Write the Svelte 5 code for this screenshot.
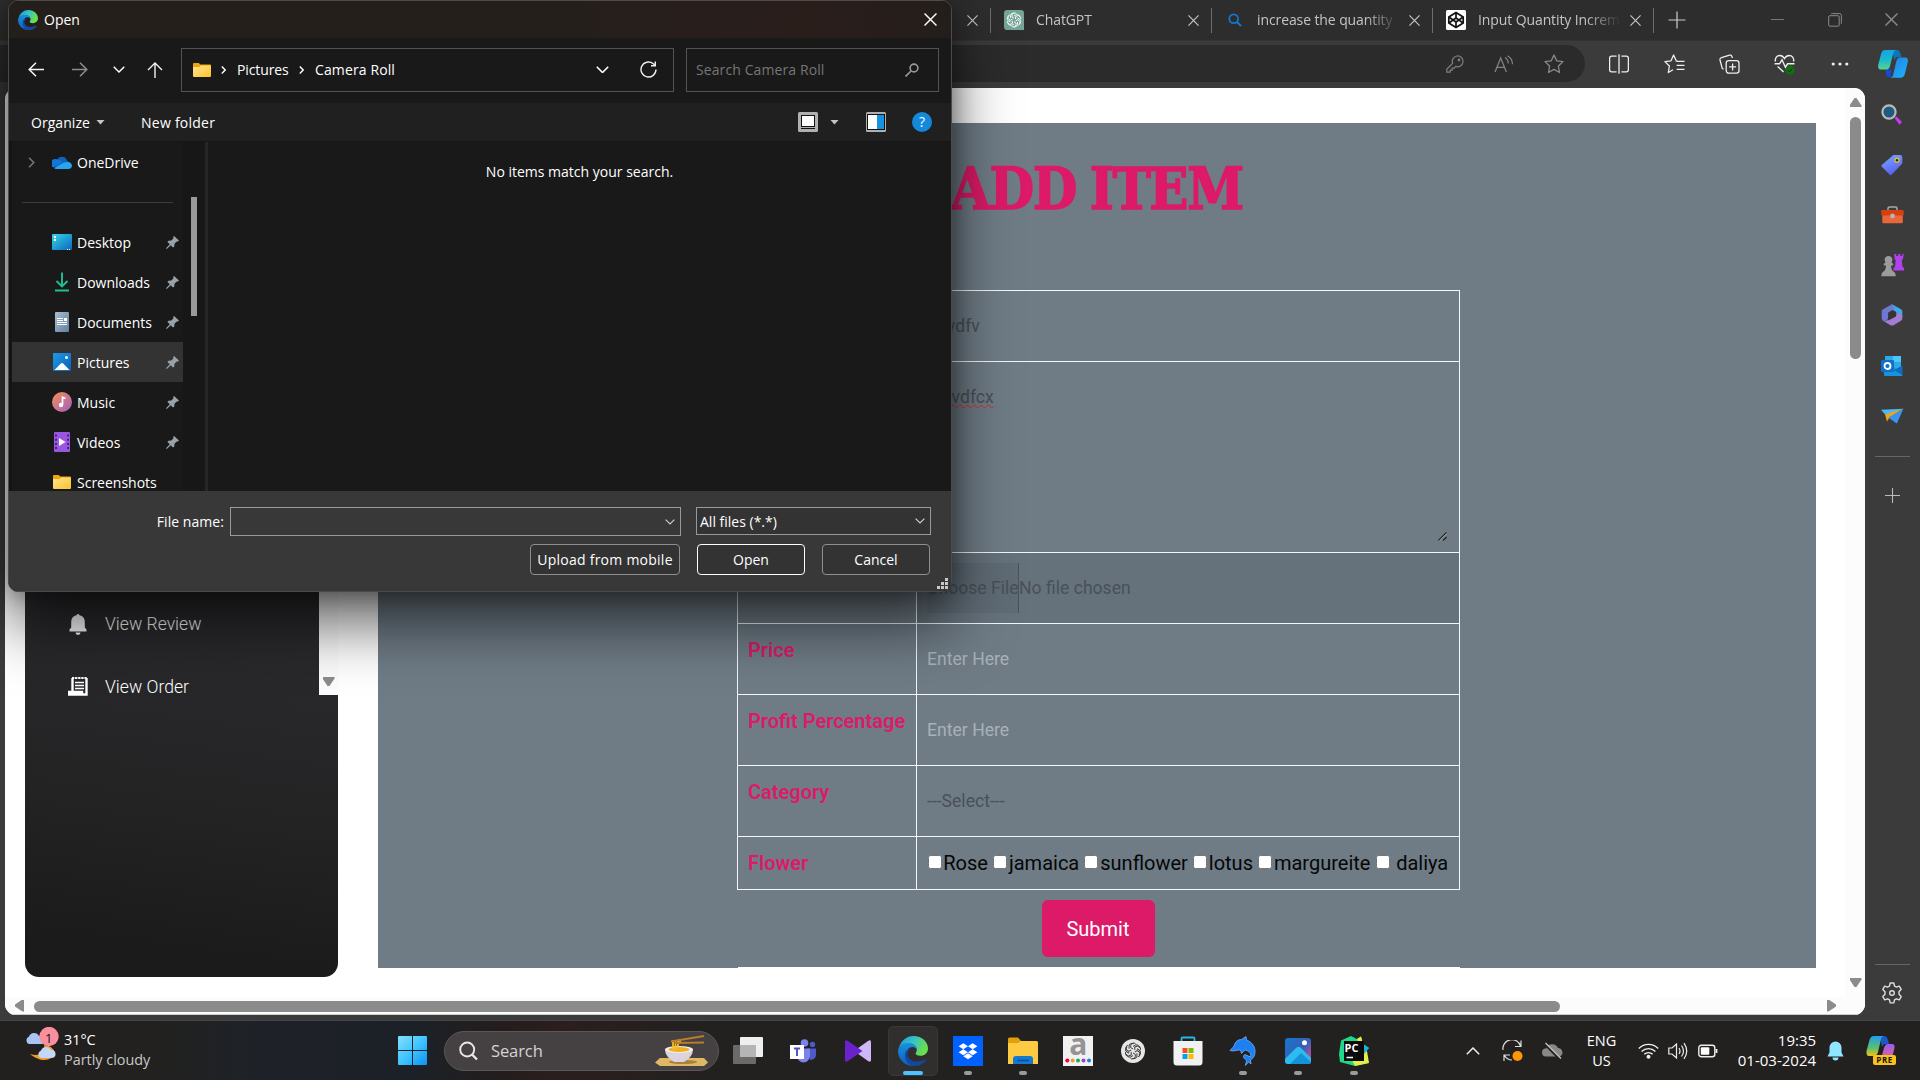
<script>
  const tabs = [
    { kind: 'gpt', title: 'ChatGPT' },
    { kind: 'search', title: 'increase the quantity' },
    { kind: 'codepen', title: 'Input Quantity Increm' }
  ];
  const tools = ['split', 'favs', 'collections', 'health', 'dots', 'copilot'];
  const sideIcons = ['lens', 'tag', 'toolbox', 'chess', 'm365', 'outlook', 'plane'];
  const places = [
    { icon: 'desktop', name: 'Desktop', pin: true },
    { icon: 'downloads', name: 'Downloads', pin: true },
    { icon: 'documents', name: 'Documents', pin: true },
    { icon: 'pictures', name: 'Pictures', pin: true, active: true },
    { icon: 'music', name: 'Music', pin: true },
    { icon: 'videos', name: 'Videos', pin: true },
    { icon: 'folder', name: 'Screenshots', pin: false }
  ];
  const apps = [
    { icon: 'taskview' }, { icon: 'teams' }, { icon: 'vs' },
    { icon: 'edge', active: true }, { icon: 'dropbox', open: true }, { icon: 'explorer', open: true },
    { icon: 'amazon' }, { icon: 'gptRound' }, { icon: 'store' },
    { icon: 'dolphin', open: true }, { icon: 'photos', open: true }, { icon: 'pycharm', open: true }
  ];
  const flowers = ['Rose', 'jamaica', 'sunflower', 'lotus', 'margureite', 'daliya'];
  const petals = [0, 60, 120, 180, 240, 300];
</script>

{#snippet cross(size)}
  <svg width={size} height={size} viewBox="0 0 10 10"><path d="M0.4 0.4 9.6 9.6M9.6 0.4 0.4 9.6" stroke="currentColor" stroke-width="1.1" fill="none" /></svg>
{/snippet}

{#snippet chevDown(w)}
  <svg width={w} height={w * 0.6} viewBox="0 0 10 6"><path d="M0.6 0.6 5 5 9.4 0.6" stroke="currentColor" stroke-width="1.2" fill="none" /></svg>
{/snippet}

{#snippet knot()}
  {#each petals as a}
    <path transform="rotate({a} 12 12)" d="M12 9.200 L8.900 7.500 V4.800 A3.900 3.900 0 0 1 15.600 2.600 M12 5.900 L15.500 4 A3.900 3.900 0 0 1 20.600 7.900" fill="none" stroke="currentColor" stroke-width="1.300" />
  {/each}
{/snippet}

{#snippet icon(name)}
  {#if name === 'gpt'}
    <svg width="20" height="20" viewBox="0 0 24 24" color="#fff"><path d="M4 0H20A4 4 0 0 1 24 4V24H4A4 4 0 0 1 0 20V4A4 4 0 0 1 4 0Z" fill="#74a596" /><g transform="translate(2.4 2.4) scale(.8)">{@render knot()}</g></svg>
  {:else if name === 'gptRound'}
    <svg width="24" height="24" viewBox="0 0 24 24" color="#3a3a3a"><circle cx="12" cy="12" r="12" fill="#e6e6e6" /><g transform="translate(3 3) scale(.75)">{@render knot()}</g></svg>
  {:else if name === 'search'}
    <svg width="14" height="14" viewBox="0 0 14 14"><circle cx="5.7" cy="5.7" r="4.4" fill="none" stroke="#1676d0" stroke-width="1.8" /><path d="M9 9 13 13" stroke="#1676d0" stroke-width="2" /></svg>
  {:else if name === 'codepen'}
    <svg width="20" height="20" viewBox="0 0 20 20"><rect width="20" height="20" rx="1.5" fill="#fff" /><g fill="none" stroke="#111" stroke-width="1.7" stroke-linejoin="round"><path d="M10 2.6 17.2 7 V13 L10 17.4 2.8 13 V7Z" /><path d="M2.8 7 10 12 17.2 7M2.8 13 10 8 17.2 13M10 2.6V8M10 12V17.4" /></g></svg>
  {:else if name === 'key'}
    <svg width="18" height="18" viewBox="0 0 18 18"><g fill="none" stroke="#808080" stroke-width="1.2"><path d="M6.6 8.3 1.2 13.7 a1.3 1.3 0 0 0-.4 1 V17.2 H4.2 V15.2 H6.2 V13.2 H8.2 L9.7 11.4 A5.4 5.4 0 1 0 6.6 8.3Z" /><circle cx="13" cy="5" r=".8" /></g></svg>
  {:else if name === 'aloud'}
    <svg width="20" height="18" viewBox="0 0 20 18"><g fill="none" stroke="#808080" stroke-width="1.3"><path d="M1 17 6.7 3 12.4 17M3 12.4H10.5M11 2.5 a7 7 0 0 1 3.2 6M13.5 0.8 a10 10 0 0 1 5 8.4" /></g></svg>
  {:else if name === 'star'}
    <svg width="20" height="20" viewBox="0 0 20 20"><path d="M10 1 12.7 6.8 19 7.6 14.4 12 15.5 18.5 10 15.4 4.5 18.5 5.6 12 1 7.6 7.3 6.8Z" fill="none" stroke="#8a8a8a" stroke-width="1.3" stroke-linejoin="round" /></svg>
  {:else if name === 'split'}
    <svg width="20" height="20" viewBox="0 0 20 20"><g fill="none" stroke="#eee" stroke-width="1.3"><path d="M7.6 2.2H2.6a2 2 0 0 0-2 2v11.6a2 2 0 0 0 2 2h5M12.4 2.2h5a2 2 0 0 1 2 2v11.6a2 2 0 0 1-2 2h-5M10 0.2v19.6" /></g></svg>
  {:else if name === 'favs'}
    <svg width="21" height="20" viewBox="0 0 21 20"><path d="M13 7.2 12.2 6.8 9.6 1 7 6.8 .9 7.6 5.4 12 4.3 18.5 9 15.8M12.6 7.4H20.5M12.6 11.4H20.5M12.6 15.4H20.5" fill="none" stroke="#eee" stroke-width="1.3" stroke-linejoin="round" /></svg>
  {:else if name === 'collections'}
    <svg width="21" height="20" viewBox="0 0 21 20"><g fill="none" stroke="#eee" stroke-width="1.3"><rect x="7.2" y="6.6" width="12.8" height="12.6" rx="2.6" /><path d="M13.6 9.4v7M10.1 12.9h7M4.6 15.2 3.2 14.4 1 6 a2 2 0 0 1 1.5-2.4L10.6 1.2 a2 2 0 0 1 2.4 1.4L13.4 4" /></g></svg>
  {:else if name === 'health'}
    <svg width="21" height="21" viewBox="0 0 21 21"><path d="M1.400 7.500C.8 4 3 1.500 5.700 1.500 8 1.500 9.500 2.800 10.500 4.500 11.500 2.800 13 1.500 15.300 1.500 18 1.500 20.200 4 19.600 7.500M.6 9.800H5.6L8 5.800 11.400 13.200 13.600 9.800H20.500M3.600 12.400 9.600 18" fill="none" stroke="#eee" stroke-width="1.4" /><circle cx="16" cy="16.2" r="4.6" fill="#0f7010" /><path d="M13.9 16.3 15.4 17.8 18.2 14.8" fill="none" stroke="#222" stroke-width="1" /></svg>
  {:else if name === 'dots'}
    <svg width="18" height="4" viewBox="0 0 18 4" fill="#eee"><circle cx="2.2" cy="2" r="1.6" /><circle cx="9" cy="2" r="1.6" /><circle cx="15.8" cy="2" r="1.6" /></svg>
  {:else if name === 'copilot'}
    <svg width="30" height="28" viewBox="0 0 30 28"><defs><linearGradient id="cpa" x1="0" y1="0" x2="0" y2="1"><stop offset="0" stop-color="#14a5e6" /><stop offset=".5" stop-color="#1bb8cf" /><stop offset="1" stop-color="#55d68c" /></linearGradient><linearGradient id="cpb" x1="0" y1="0" x2="1" y2="1"><stop offset="0" stop-color="#2a78e4" /><stop offset="1" stop-color="#18b8f8" /></linearGradient></defs><path d="M14 0h5c2 0 3 1.500 3.500 4l1 3.200h-4c-2 0-2.600 1-3.100 3z" fill="#0b76b5" /><path d="M8 19.500h5.500l-1 8c-2.500 0-4-1-4.500-4z" fill="#1748d8" /><path d="M7.500 0H19c-2.500 0-3.300 1.500-4 4.200L12 16c-.7 2.700-1.800 3.600-4.400 3.600H3C.6 19.600-.3 17.500.3 14.500L3.200 3.600C4 1 5.200 0 7.500 0Z" fill="url(#cpa)" /><path d="M22.500 7.600H27c2.500 0 3.400 2 2.700 5L26.800 24c-.7 2.600-2 3.800-4.300 3.800H11.600c2.300 0 3.200-1.600 3.800-4l2.800-12c.7-3 1.800-4.200 4.300-4.200Z" fill="url(#cpb)" /></svg>
  {:else if name === 'lens'}
    <svg width="22" height="22" viewBox="0 0 22 22"><path d="M13.500 14 15.500 12.500 21 18 18.500 20.800Z" fill="#c63bf0" /><circle cx="8" cy="8" r="6.600" fill="#1f5a80" stroke="#b9b9b9" stroke-width="2.200" /></svg>
  {:else if name === 'tag'}
    <svg width="22" height="22" viewBox="0 0 22 22"><defs><linearGradient id="tg" x1="0" y1="0" x2=".4" y2="1"><stop offset="0" stop-color="#79a9ff" /><stop offset="1" stop-color="#5a62f0" /></linearGradient></defs><path d="M12.500 1H19a2.300 2.300 0 0 1 2.300 2.300V9.500L10.800 20.600a1.600 1.600 0 0 1-2.200 0L1 13a1.600 1.600 0 0 1 0-2.200Z" fill="url(#tg)" /><circle cx="16" cy="6.200" r="2.600" fill="#e8c020" /><circle cx="16" cy="6.200" r="1.200" fill="#222" /></svg>
  {:else if name === 'toolbox'}
    <svg width="23" height="18" viewBox="0 0 23 18"><path d="M7 4V2.600A1.600 1.600 0 0 1 8.600 1h5.800A1.600 1.600 0 0 1 16 2.600V4" fill="none" stroke="#a9a9a9" stroke-width="1.500" /><rect x="1.300" y="8.500" width="20.500" height="8.800" rx="1.200" fill="#e8663a" /><rect x=".2" y="4" width="22.500" height="5.500" rx=".8" fill="#d2410f" /><circle cx="11.500" cy="10" r="2.400" fill="#bdb3ad" /></svg>
  {:else if name === 'chess'}
    <svg width="23" height="24" viewBox="0 0 23 24"><path d="M13.200 1h2v2h2V1h2.200v2h1.900V1h1.500l-1 5.500h-1l.6 7 1.600 1.500v2.500H12.500V15l1.600-1.500.6-7h-1Z" fill="#b042ee" /><path d="M7.500 3a4 4 0 0 1 3 6.600 l1.700 1.200v1.600H10c0 3 1 5.200 3.200 6.600 1.200 1 1.500 2 1.500 4.200H.4c0-2.200.3-3.200 1.500-4.200C4 17.600 5 15.400 5 12.400H2.800v-1.600l1.700-1.200A4 4 0 0 1 7.500 3Z" fill="#9c9c9c" /></svg>
  {:else if name === 'm365'}
    <svg width="22" height="22" viewBox="0 0 22 22"><path d="M11 .3 20 5.200Q21.300 6 21.300 7.500V13L15.500 10V8L9 4.500Z" fill="#3fa9e8" /><path d="M11 .3 2 5.200Q.7 6 .7 7.500V14.500Q.7 16.500 2.500 17 6.500 17.500 7.200 13.500V8.500L13.500 5Z" fill="#7376cf" /><path d="M21.300 11.500V14.500Q21.300 16 20 16.700L12.500 21.200Q11 22 9.500 21.200L2 16.800Q4 17.800 6.500 16.300L15.500 11V8Z" fill="#a47cd6" /><path d="M7.300 9 11 7 15 9v3.500l-7.700 4Z" fill="#353535" /></svg>
  {:else if name === 'outlook'}
    <svg width="22" height="20" viewBox="0 0 22 20"><rect x="4" y="0" width="16" height="13" fill="#2fa8e8" /><rect x="12" y="0" width="8" height="6" fill="#4cc5fa" /><path d="M3 13 12 10 21.500 19a1 1 0 0 1-.6 1H4a1 1 0 0 1-1-1Z" fill="#1793da" /><path d="M21.500 9.500v9.500L13 14Z" fill="#0d6cbd" /><rect x="0" y="4" width="13" height="12" rx="1.200" fill="#0f70c8" /><circle cx="6.500" cy="10" r="3" fill="none" stroke="#fff" stroke-width="1.800" /></svg>
  {:else if name === 'plane'}
    <svg width="23" height="16" viewBox="0 0 23 16"><path d="M0 1.800 22.500.8 5 7.500Z" fill="#4eb9f5" /><path d="M4 6.500 22.500.8 8.500 9.500 6 13.500Z" fill="#eda51a" /><path d="M22.500.8 15.800 15.500 7.500 9.800Z" fill="#3894ee" /></svg>
  {:else if name === 'gear'}
    <svg width="22" height="22" viewBox="0 0 22 22"><path d="M9.200 1h3.600l.7 3 1.900 1.100 2.900-1 1.900 3.200L18 9.700v2.600l2.200 2.300-1.900 3.200-2.900-1-1.900 1.100-.7 3H9.200l-.7-3-1.900-1.100-2.900 1-1.900-3.200L4 12.300V9.700L1.800 7.400l1.900-3.200 2.900 1L8.500 4Z" fill="none" stroke="#ddd" stroke-width="1.400" stroke-linejoin="round" /><circle cx="11" cy="11" r="2.300" fill="none" stroke="#ddd" stroke-width="1.400" /></svg>
  {:else if name === 'folder'}
    <svg width="18" height="14" viewBox="0 0 18 14"><defs><linearGradient id="fo" x1="0" y1="0" x2="1" y2="1"><stop offset="0" stop-color="#ffe391" /><stop offset="1" stop-color="#fcc42c" /></linearGradient></defs><path d="M0 1A1 1 0 0 1 1 0H5.800L7.300 1.500H17a1 1 0 0 1 1 1V6H0Z" fill="#efa60c" /><path d="M0 4H6.500L8 2.500H18V13a1 1 0 0 1-1 1H1a1 1 0 0 1-1-1Z" fill="url(#fo)" /></svg>
  {:else if name === 'desktop'}
    <svg width="20" height="16" viewBox="0 0 20 16"><defs><linearGradient id="de" x1="0" y1="0" x2="1" y2="1"><stop offset="0" stop-color="#38d5e8" /><stop offset="1" stop-color="#0a66bf" /></linearGradient></defs><rect width="20" height="16" rx="1" fill="url(#de)" /><path d="M2 2h2v2H2zM2 5h2v2H2zM15 15h1v1h-1zM17 15h1v1h-1z" fill="#fff" /></svg>
  {:else if name === 'downloads'}
    <svg width="14" height="20" viewBox="0 0 14 20"><path d="M7 .5V14M1.500 9 7 14.500 12.500 9M0 18.500H14" stroke="#1fbf95" stroke-width="1.900" fill="none" /></svg>
  {:else if name === 'documents'}
    <svg width="14" height="20" viewBox="0 0 14 20"><defs><linearGradient id="do" x1="0" y1="0" x2="1" y2="1"><stop offset="0" stop-color="#a9bdd0" /><stop offset="1" stop-color="#61809f" /></linearGradient></defs><rect width="14" height="20" rx="1" fill="url(#do)" /><path d="M2 6.500H8M2 8.500H8M2 10.500H12M2 12.500H12" stroke="#fff" stroke-width="1" /><rect x="9" y="6" width="3" height="3" fill="#fff" /></svg>
  {:else if name === 'pictures'}
    <svg width="18" height="18" viewBox="0 0 18 18"><defs><linearGradient id="pi" x1="0" y1="0" x2="1" y2="1"><stop offset="0" stop-color="#1f9be8" /><stop offset="1" stop-color="#0a5fb8" /></linearGradient></defs><rect width="18" height="18" rx="1" fill="url(#pi)" /><path d="M1.500 17 7.800 10.500Q9 9.600 10.200 10.500L16.500 17Z" fill="#fff" /><circle cx="13.500" cy="4.500" r="1.500" fill="#fff" /></svg>
  {:else if name === 'music'}
    <svg width="20" height="20" viewBox="0 0 20 20"><defs><linearGradient id="mu" x1="0" y1="0" x2="1" y2="1"><stop offset=".1" stop-color="#f08a5d" /><stop offset="1" stop-color="#a05fc8" /></linearGradient></defs><circle cx="10" cy="10" r="10" fill="url(#mu)" /><circle cx="9" cy="13" r="2.200" fill="#fff" /><path d="M10.500 13V5.300L13.500 6.500" stroke="#fff" stroke-width="1.700" fill="none" /></svg>
  {:else if name === 'videos'}
    <svg width="16" height="20" viewBox="0 0 16 20"><rect width="16" height="20" rx="1" fill="#9a56e0" /><path d="M2 2.500V19M14 2.500V19" stroke="#3e1f72" stroke-width="1.800" stroke-dasharray="2 2.200" /><path d="M5 6 11.500 10 5 14Z" fill="#fff" /></svg>
  {:else if name === 'taskview'}
    <svg width="32" height="30" viewBox="0 0 32 30"><rect x="8" y="1" width="23" height="20" rx="1" fill="#efefef" /><rect x="1" y="9" width="23" height="19" rx="1" fill="#777" opacity=".85" /><path d="M8 9H24V21H8Z" fill="#b5b5b5" /></svg>
  {:else if name === 'teams'}
    <svg width="28" height="26" viewBox="0 0 28 26"><circle cx="15.500" cy="5" r="3.800" fill="#7b83eb" /><circle cx="23.500" cy="6.500" r="2.700" fill="#5059c9" /><path d="M18 10.500H27V17a5 5 0 0 1-6 4.800Z" fill="#5059c9" /><path d="M8 10.500H21V18a6.500 6.500 0 0 1-13 0Z" fill="#7b83eb" /><rect x="1" y="7" width="14" height="14" fill="#fff" /><path d="M5 10.500H11M8 10.500V18" stroke="#4b53bc" stroke-width="1.900" /></svg>
  {:else if name === 'vs'}
    <svg width="28" height="24" viewBox="0 0 28 24"><path d="M27 2.500V21.500Q26.500 23.500 24 22L10 12 24 2Q26.500.5 27 2.500Z" fill="#cdb8f5" /><path d="M1 2.500Q1.500.5 4 2L18.500 12 4 22Q1.500 23.500 1 21.500Z" fill="#6a22cc" /></svg>
  {:else if name === 'edge'}
    <svg width="100%" height="100%" viewBox="0 0 30 30"><defs><linearGradient id="ea" x1="0" y1="0" x2="1" y2=".4"><stop offset="0" stop-color="#1c97dc" /><stop offset=".5" stop-color="#36c2c8" /><stop offset="1" stop-color="#6be04a" /></linearGradient><linearGradient id="eb" x1="0" y1="0" x2="0" y2="1"><stop offset="0" stop-color="#1a90dc" /><stop offset="1" stop-color="#0b5fc0" /></linearGradient></defs><path d="M1 12A14.800 14.800 0 0 1 15.500 0C24 0 30 6 30 12.500c0 4.500-3.400 7.300-7.500 7.300-3.500 0-4.900-1.100-4.900-2.200 0-.8 1.200-1.500 1.200-4 0-3.600-3.600-6.200-8-6.200-4 0-8.600 2-9.800 4.600Z" fill="url(#ea)" /><path d="M0 15.500C0 9.500 5.300 7 10.500 7c4.600 0 8.400 2.500 8.400 6.400-1-1.500-2.600-2.400-4.400-2.400-3.600 0-6 3-6 7 0 5.500 4 9.700 9.500 11.700A15 15 0 0 1 0 15.500Z" fill="url(#eb)" /><path d="M12.400 13.700C10 15 9 17 9.600 19.500c1 4 5 6 9.700 6 3 0 5.500-.8 7.600-2.200.6-.4 1.300.3.900.9C25.600 28 20.500 30.800 15 29.900 9.700 28.500 7 24 7 19.500 7 15 9.500 12.500 12.400 13.700Z" fill="#12499c" /></svg>
  {:else if name === 'dropbox'}
    <svg width="30" height="30" viewBox="0 0 30 30"><rect width="30" height="30" fill="#0061fe" /><path d="M10.300 7.300 15 10.300 10.300 13.300 5.600 10.300ZM19.700 7.300 24.400 10.300 19.700 13.300 15 10.300ZM10.300 13.300 15 16.300 10.300 19.300 5.600 16.300ZM19.700 13.300 24.400 16.300 19.700 19.300 15 16.300ZM15 17.300 19.700 20.300 15 23.300 10.300 20.300Z" fill="#fff" /></svg>
  {:else if name === 'explorer'}
    <svg width="30" height="28" viewBox="0 0 30 28"><path d="M0 2A1.500 1.500 0 0 1 1.500.5H10L13 4H27V10H0Z" fill="#e0a00c" /><path d="M0 6H10L13 4H28.500A1.500 1.500 0 0 1 30 5.500V27H0Z" fill="#fccb41" /><path d="M5 27V22a3 3 0 0 1 3-3H22a3 3 0 0 1 3 3V27Z" fill="#1579d0" /><path d="M9 23.500H21" stroke="#0b4f95" stroke-width="1.500" /></svg>
  {:else if name === 'amazon'}
    <span class="amz"><b>a</b><svg width="26" height="5" viewBox="0 0 26 5"><circle cx="2.300" cy="2.500" r="2" fill="#f00034" /><circle cx="7.700" cy="2.500" r="2" fill="#ef9a2d" /><circle cx="13" cy="2.500" r="2" fill="#19a95e" /><circle cx="18.500" cy="2.500" r="2" fill="#9a3fd8" /><circle cx="24" cy="2.500" r="2" fill="#1681e0" /></svg></span>
  {:else if name === 'store'}
    <svg width="30" height="30" viewBox="0 0 30 30"><path d="M8.500 6V2.500A1 1 0 0 1 9.500 1.500H20.500A1 1 0 0 1 21.500 2.500V6" fill="none" stroke="#28b5e8" stroke-width="1.800" /><path d="M.5 5H29.500V26a3.500 3.500 0 0 1-3.500 3.500H4A3.500 3.500 0 0 1 .5 26Z" fill="#f1f1f1" /><path d="M9.500 12H14.500V17H9.500Z" fill="#f25022" /><path d="M15.500 12H20.500V17H15.500Z" fill="#7fba00" /><path d="M9.500 18H14.500V23H9.500Z" fill="#00a4ef" /><path d="M15.500 18H20.500V23H15.500Z" fill="#ffb900" /></svg>
  {:else if name === 'dolphin'}
    <svg width="28" height="30" viewBox="0 0 28 30"><path d="M1 14.500C3 12 5 11 5.500 8.500 6.500 5.500 9 3.500 12.500 3.500L17 .5 17.500 4C23 6 26.500 11 26 16.500 25.800 20 24 22.500 21.500 24L22 28 19.500 26 16.500 29.500 17.500 24.500C14 22 13.500 19.500 16 18.500L21.500 21C22.500 18 20.500 15 16 14L12.500 17.500 11.500 14C8 13.500 5 16 1 14.500Z" fill="#1c80f2" stroke="#75adf5" stroke-width=".8" /></svg>
  {:else if name === 'photos'}
    <svg width="26" height="26" viewBox="0 0 26 26"><defs><linearGradient id="ph" x1="0" y1="0" x2="1" y2=".8"><stop offset="0" stop-color="#1279cf" /><stop offset=".6" stop-color="#3b5cb5" /><stop offset="1" stop-color="#c0509a" /></linearGradient></defs><rect width="26" height="26" rx="3" fill="url(#ph)" /><path d="M0 21 11.500 9.500Q13.500 8 15.500 9.500L26 20V23a3 3 0 0 1-3 3H3a3 3 0 0 1-3-3Z" fill="#2cbdf0" /><path d="M5 26 16 15 26 24Q25.500 26 23 26Z" fill="#1593d8" /><circle cx="19.500" cy="4.800" r="2.500" fill="#fff" /></svg>
  {:else if name === 'pycharm'}
    <span class="pc"><svg width="30" height="30" viewBox="0 0 30 30"><path d="M2 4.500 12 0 18 3 22 .5 24 8 30 12 26 16 30 27 16 30 1 26 0 18Z" fill="#21d789" /><path d="M18 3 22 .5 24 8 20 9ZM12 22 28 15 30 27 16 30Z" fill="#e4ee45" /><path d="M24 8 30 12 25 18Z" fill="#12b7df" /><rect x="5" y="5" width="20" height="20" fill="#0b0b0b" /><path d="M7.500 21.500H14" stroke="#fff" stroke-width="1.500" /></svg><b>PC</b></span>
  {/if}
{/snippet}

<div class="screen">
  <div class="browser">
    <header class="tabbar">
      <div class="tab first"><span class="tx">{@render cross(11)}</span></div>
      {#each tabs as t}
        <div class="tab"><span class="fav">{@render icon(t.kind)}</span><span class="tt">{t.title}</span><span class="tx">{@render cross(11)}</span></div>
      {/each}
      <div class="newtab"><svg width="18" height="18" viewBox="0 0 18 18"><path d="M9 .5V17.500M.5 9H17.500" stroke="#ccc" stroke-width="1.200" /></svg></div>
      <div class="winctl">
        <span><svg width="13" height="13" viewBox="0 0 13 13"><path d="M0 6.500H13" stroke="#777" stroke-width="1" /></svg></span>
        <span><svg width="14" height="14" viewBox="0 0 14 14"><g fill="none" stroke="#8a8a8a" stroke-width="1"><rect x=".7" y="2.700" width="10.500" height="10.500" rx="1.300" /><path d="M3 1A1.500 1.500 0 0 1 4.500.6H11.500A1.900 1.900 0 0 1 13.400 2.500V9.500Q13.400 10.500 12.800 11" /></g></svg></span>
        <span class="dim">{@render cross(13)}</span>
      </div>
    </header>
    <div class="toolbar">
      <div class="address"><span>{@render icon('key')}</span><span>{@render icon('aloud')}</span><span>{@render icon('star')}</span></div>
      <div class="tools">{#each tools as t}<span>{@render icon(t)}</span>{/each}</div>
    </div>
    <div class="main">
      <div class="viewport">
        <div class="page">
          <aside class="menu">
            <div class="menulist">
              <div class="mi"><svg width="18" height="22" viewBox="0 0 18 22" fill="#fff"><path d="M9 1q1.300 0 1.500 1.300C14 3 15.800 5.600 15.800 9v5.500l1.700 2V18.500H.5V16.500l1.700-2V9C2.200 5.600 4 3 7.500 2.300Q7.700 1 9 1ZM6.500 19.500h5a2.500 2.500 0 0 1-5 0Z" /></svg><span>View Review</span></div>
              <div class="mi"><svg width="20" height="19" viewBox="0 0 20 19"><path d="M4.500 1V14M18.500 1V17.500H1V15H14v2" fill="none" stroke="#fff" stroke-width="2.400" /><path d="M4 1H19" stroke="#fff" stroke-width="2" stroke-dasharray="2.300 .8" /><path d="M7 5.500H16M7 8.500H16M7 11.500H16" stroke="#fff" stroke-width="1.400" /></svg><span>View Order</span></div>
            </div>
            <div class="menuscroll"><i class="tri down"></i></div>
          </aside>
          <section class="panel">
            <h1><span>ADD ITEM</span></h1>
            <div class="form">
              <div class="row"><b>Name</b><div class="val dark">ddvdfv</div></div>
              <div class="row tall"><b>Description</b><div class="val dark top"><span class="misspelt">dfvvdfcx</span>
                <svg class="resize" width="9" height="9" viewBox="0 0 9 9"><path d="M.5 8.500 8.500.5M5 8.500 8.500 5" stroke="#222" stroke-width="1.300" /><path d="M1.500 8.800 8.800 1.500" stroke="#ddd" stroke-width=".6" /></svg></div></div>
              <div class="row"><b>Image</b><div class="val file"><span class="choose">Choose File</span><span>No file chosen</span></div></div>
              <div class="row"><b>Price</b><div class="val">Enter Here</div></div>
              <div class="row"><b>Profit Percentage</b><div class="val">Enter Here</div></div>
              <div class="row"><b>Category</b><div class="val dark">---Select---</div></div>
              <div class="row short"><b>Flower</b><div class="flowers">{#each flowers as f, i}<label class:wide={i === 5}><i></i>{f}</label>{/each}</div></div>
            </div>
            <div class="submit">Submit</div>
            <div class="rule"></div>
          </section>
        </div>
        <div class="vbar"><i class="tri up"></i><div class="vthumb"></div><i class="tri down"></i></div>
        <div class="hbar"><i class="tri left"></i><div class="hthumb"></div><i class="tri right"></i></div>
      </div>
      <nav class="side">
        {#each sideIcons as s}<span>{@render icon(s)}</span>{/each}
        <hr />
        <svg class="plus" width="15" height="15" viewBox="0 0 15 15"><path d="M7.500 0V15M0 7.500H15" stroke="#bbb" stroke-width="1.100" /></svg>
        <hr class="low" />
        <span class="gear">{@render icon('gear')}</span>
      </nav>
    </div>
  </div>

  <footer class="taskbar">
    <div class="weather">
      <svg width="36" height="36" viewBox="0 0 36 36"><path d="M19 18c6 0 10 4 11 8-2 7-13 11-25 1 10 3 16-2 14-9Z" fill="#f39a2a" /><path d="M4 17a4 4 0 0 1 0-7.500A5.500 5.500 0 0 1 14 9a4 4 0 0 1 3 8Z" fill="#a9c4f2" /><path d="M16 31a4 4 0 0 1 0-7.500 5.500 5.500 0 0 1 10-.5 4 4 0 0 1 1 8Z" fill="#c3d7f8" /><circle cx="24" cy="9.500" r="9.700" fill="#f98f9d" /></svg>
      <em>1</em>
      <div><p>31°C</p><p class="soft">Partly cloudy</p></div>
    </div>
    <svg class="start" width="29" height="29" viewBox="0 0 29 29"><defs><linearGradient id="win" x1="0" y1="0" x2="1" y2="1"><stop offset="0" stop-color="#87dfff" /><stop offset=".5" stop-color="#40c4ff" /><stop offset="1" stop-color="#0b93f5" /></linearGradient></defs><path d="M0 1A1 1 0 0 1 1 0H14V14H0ZM15 0H28A1 1 0 0 1 29 1V14H15ZM0 15H14V29H1A1 1 0 0 1 0 28ZM15 15H29V28A1 1 0 0 1 28 29H15Z" fill="url(#win)" /></svg>
    <div class="tsearch">
      <svg width="19" height="20" viewBox="0 0 19 20"><circle cx="8.200" cy="8.500" r="7" fill="none" stroke="#e8e8e8" stroke-width="1.900" /><path d="M13 13.500 18 18.500" stroke="#e8e8e8" stroke-width="2.400" /></svg>
      <span>Search</span>
      <svg class="bowl" width="54" height="32" viewBox="0 0 54 32"><path d="M5 23H49L53 27.500 49 31H5L0 27.500Z" fill="#dfb765" /><ellipse cx="28" cy="27" rx="14" ry="2" fill="#a9813c" /><path d="M10 14H38Q38 22 29 27H19Q10 22 10 14Z" fill="#dcd3dc" /><ellipse cx="24" cy="14.500" rx="14" ry="3.500" fill="#f3edf0" /><ellipse cx="24" cy="14.500" rx="10.500" ry="2.400" fill="#f0b11e" /><path d="M18 5V14M20.500 5V15M23 4.500V13M25 4V8" stroke="#f8bd25" stroke-width="1.800" /><path d="M16 6.500 49 1M20 8 49 7.500" stroke="#b87c2d" stroke-width="1.800" /></svg>
    </div>
    <div class="apps">
      {#each apps as a}
        <div class="app" class:active={a.active} class:open={a.open}><div class="tile"><span class="ic">{@render icon(a.icon)}</span></div></div>
      {/each}
    </div>
    <div class="tray">
      <span class="t40 up"><svg width="14" height="8" viewBox="0 0 14 8"><path d="M.8 7.200 7 1 13.200 7.200" fill="none" stroke="#eee" stroke-width="1.500" /></svg></span>
      <span class="t40"><svg width="22" height="22" viewBox="0 0 22 22"><g fill="none" stroke="#ddd" stroke-width="1.200"><path d="M1 10A9 9 0 0 1 18.500 6M19 .5V6.500H13M10 20A9 9 0 0 1 2.500 15.500M2 21V15H8" /></g><circle cx="15.500" cy="16" r="5" fill="#ff9800" /></svg></span>
      <span class="t40"><svg width="22" height="18" viewBox="0 0 22 18"><path d="M4 14.500a4 4 0 0 1 0-8A6.500 6.500 0 0 1 16 6a4.500 4.500 0 0 1 2 8.500Z" fill="#888" /><path d="M2.500 1.500 18 17" stroke="#222" stroke-width="3" /><path d="M3.500 1 19 16.500" stroke="#ccc" stroke-width="1.200" /></svg></span>
      <div class="lang"><p>ENG</p><p>US</p></div>
      <span class="t30"><svg width="21" height="16" viewBox="0 0 21 16"><g fill="none" stroke="#eee" stroke-width="1.400"><path d="M.8 5.500A13.500 13.500 0 0 1 20.200 5.500M3.600 8.500A9.700 9.700 0 0 1 17.400 8.500M6.300 11.300A6 6 0 0 1 14.700 11.300" /></g><circle cx="10.500" cy="13.700" r="2" fill="#eee" /></svg></span>
      <span class="t30"><svg width="20" height="18" viewBox="0 0 20 18"><g fill="none" stroke="#eee" stroke-width="1.200"><path d="M.8 6H4L8.500 2V16L4 12H.8Z" /><path d="M11 6Q13 9 11 12M13.500 3.500Q17.500 9 13.500 14.500M16 1.200Q21.500 9 16 16.800" /></g></svg></span>
      <span class="t30"><svg width="20" height="14" viewBox="0 0 20 14"><rect x=".8" y="1.200" width="16" height="11.600" rx="2.500" fill="none" stroke="#eee" stroke-width="1.400" /><rect x="2.800" y="3.200" width="8.500" height="7.600" rx="1" fill="#fff" /><path d="M18.500 5v4" stroke="#eee" stroke-width="1.800" /></svg></span>
      <div class="clock"><p>19:35</p><p>01-03-2024</p></div>
      <svg class="bell" width="17" height="20" viewBox="0 0 17 20" fill="#8fe6ff"><path d="M8.500.5A6 6 0 0 1 14.500 6.500V11.500L16.500 15.500H.5L2.500 11.500V6.500A6 6 0 0 1 8.500.5ZM5.500 16.500H11.500a3 3 0 0 1-6 0Z" /></svg>
      <div class="pre"><svg width="30" height="27" viewBox="0 0 30 27"><defs><linearGradient id="pa" x1="0" y1="0" x2="0" y2="1"><stop offset="0" stop-color="#209df0" /><stop offset=".6" stop-color="#5cc06a" /><stop offset="1" stop-color="#f2c319" /></linearGradient><linearGradient id="pb" x1="0" y1="0" x2="0" y2="1"><stop offset="0" stop-color="#9a5cf0" /><stop offset="1" stop-color="#f5667a" /></linearGradient></defs><path d="M14 0H18Q21 0 22 4L23 8H19Q17 8 16 11Z" fill="#1d58c8" /><path d="M8 0H18Q15.500 0 14.800 4L12 16Q11 20 7 20H3Q0 20 .5 15L3.500 4Q4.500 0 8 0Z" fill="url(#pa)" /><path d="M22 8H26Q29 8 28.500 12L26 22Q25 27 21 27H11Q14 27 15 23L18 12Q19 8 22 8Z" fill="url(#pb)" /></svg><em>PRE</em></div>
    </div>
  </footer>

  <div class="dialog">
    <div class="dtitle"><span class="dedge">{@render icon('edge')}</span><span>Open</span><span class="dclose">{@render cross(13)}</span></div>
    <div class="dnav">
      <span class="n1"><svg width="16" height="15" viewBox="0 0 16 15"><path d="M8 .8 1.200 7.500 8 14.200M1 7.500H16" fill="none" stroke="#f4f4f4" stroke-width="1.500" /></svg></span>
      <span class="n1"><svg width="16" height="15" viewBox="0 0 16 15"><path d="M8 .8 14.800 7.500 8 14.200M15 7.500H0" fill="none" stroke="#8d8d8d" stroke-width="1.500" /></svg></span>
      <span class="n2">{@render chevDown(12)}</span>
      <span class="n2"><svg width="16" height="16" viewBox="0 0 16 16"><path d="M1 8 8 1 15 8M8 1V16" fill="none" stroke="#f4f4f4" stroke-width="1.400" /></svg></span>
      <div class="path">
        {@render icon('folder')}
        <svg class="cr" width="5" height="8" viewBox="0 0 5 8"><path d="M.8 .6 4.200 4 .8 7.400" fill="none" stroke="#fff" stroke-width="1.400" /></svg>
        <span class="p1">Pictures</span>
        <svg class="cr" width="5" height="8" viewBox="0 0 5 8"><path d="M.8 .6 4.200 4 .8 7.400" fill="none" stroke="#fff" stroke-width="1.400" /></svg>
        <span class="p2">Camera Roll</span>
        <span class="pchev">{@render chevDown(13)}</span>
        <svg class="reload" width="17" height="17" viewBox="0 0 17 17"><path d="M16 8.500A7.500 7.500 0 1 1 13 2.500L15 4.200M15.300 .5V4.700H11" fill="none" stroke="#eee" stroke-width="1.400" /></svg>
      </div>
      <div class="dsearch"><span>Search Camera Roll</span><svg width="14" height="14" viewBox="0 0 14 14"><circle cx="9" cy="5" r="3.900" fill="none" stroke="#999" stroke-width="1.600" /><path d="M6 8 .5 13.500" stroke="#999" stroke-width="1.700" /></svg></div>
    </div>
    <div class="dtools">
      <span class="org">Organize</span><i class="small"></i><span class="nf">New folder</span>
      <svg class="view" width="20" height="20" viewBox="0 0 20 20"><rect width="20" height="20" rx="1.500" fill="#b0b0b0" /><rect x="3.500" y="3.500" width="13" height="11" fill="#fff" stroke="#111" /><path d="M3 16.500H17" stroke="#111" /></svg>
      <i class="small s2"></i>
      <svg class="pane" width="20" height="20" viewBox="0 0 20 20"><rect width="20" height="20" rx="1.500" fill="#b0b0b0" /><rect x="1.500" y="2.500" width="17" height="15" fill="#fff" stroke="#111" /><rect x="11" y="3" width="7" height="14" fill="#1593e0" /></svg>
      <span class="help">?</span>
    </div>
    <div class="dbody">
      <div class="tree">
        <div class="node od"><svg class="ex" width="7" height="11" viewBox="0 0 7 11"><path d="M1 .8 5.800 5.500 1 10.200" fill="none" stroke="#777" stroke-width="1.500" /></svg><span class="nic"><svg width="20" height="13" viewBox="0 0 20 13"><path d="M5 3.500A5.500 5.500 0 0 1 15 4.500L19 8 10 10 1 11A4 4 0 0 1 5 3.500Z" fill="#0f62b8" /><path d="M5 3.500Q8 3.500 10.500 6L1.500 11.500A4.200 4.200 0 0 1 5 3.500Z" fill="#1278d8" /><path d="M2 12 12 6.500Q19 4.500 20 9.500 19.800 13 16 13H4.500Q2.800 13 2 12Z" fill="#28a5ee" /></svg></span><span class="nm">OneDrive</span></div>
        <hr />
        {#each places as p}
          <div class="node" class:sel={p.active}><span class="nic">{@render icon(p.icon)}</span><span class="nm">{p.name}</span>{#if p.pin}<svg class="pin" width="13" height="13" viewBox="0 0 13 13"><path d="M8 0 13 4.500 11.800 5.500 10.500 5.700 8.500 7.700 8.300 10.500 7 11.500 4.800 9.200 .8 13 0 12.200 3.800 8.200 1.500 6 2.500 4.800 5.300 4.500 7.300 2.500 7.200 1Z" fill="#98a2a9" /></svg>{/if}</div>
        {/each}
      </div>
      <div class="treebar"><div></div></div>
      <div class="list">No items match your search.</div>
    </div>
    <div class="dfoot">
      <div class="l1"><span class="fn">File name:</span><div class="inp">{@render chevDown(10)}</div><div class="sel2"><span>All files (*.*)</span><span class="grey">{@render chevDown(10)}</span></div></div>
      <div class="l2"><div class="btn up2">Upload from mobile</div><div class="btn def">Open</div><div class="btn">Cancel</div></div>
      <svg class="grip" width="11" height="11" viewBox="0 0 11 11" fill="#c8c8c8"><path d="M8 0H11V3H8ZM4 4H7V7H4ZM8 4H11V7H8ZM0 8H3V11H0ZM4 8H7V11H4ZM8 8H11V11H8Z" /></svg>
    </div>
  </div>
</div>

<style>
  :global(body) { margin: 0; overflow: hidden; background: #222; }
  .screen, .screen * { box-sizing: border-box; }
  .screen { position: relative; width: 1920px; height: 1080px; overflow: hidden; display: flex; flex-direction: column; font-family: 'Open Sans', 'Noto Sans', sans-serif; font-size: 14px; color: #fff; white-space: nowrap; }
  svg { display: block; flex: none; }
  p { margin: 0; }
  .browser { height: 1021px; background: #3b3b3b; display: flex; flex-direction: column; border-bottom: 1px solid #454545; }
  .tabbar { height: 40px; background: #2d2d2d; display: flex; align-items: center; padding-left: 769.500px; color: #c4c4c4; }
  .tab { width: 221px; height: 40px; display: flex; align-items: center; padding-left: 13px; position: relative; }
  .tab::after { content: ''; position: absolute; right: 0; top: 8px; width: 1px; height: 25px; background: #6e6e6e; }
  .fav { width: 20px; display: flex; justify-content: center; }
  .tt { width: 144px; margin-left: 12.500px; letter-spacing: -.1px; line-height: 22px; mask-image: linear-gradient(90deg, #000 75%, transparent 99%); }
  .tx { margin-left: auto; margin-right: 13px; }
  .newtab { margin-left: 14px; }
  .winctl { margin-left: auto; display: flex; }
  .winctl span { width: 57px; display: flex; justify-content: center; }
  .winctl .dim { color: #8a8a8a; }
  .toolbar { height: 48px; display: flex; align-items: center; border-top: 1px solid #333; }
  .address { width: 1585px; height: 37px; margin-top: -2px; border-radius: 0 19px 19px 0; background: #2b2b2b; display: flex; justify-content: flex-end; align-items: center; padding-right: 6.500px; }
  .address span { width: 49.500px; display: flex; justify-content: center; }
  .tools { display: flex; padding-left: 6.500px; align-items: center; margin-top: -1px; }
  .tools span { width: 55.200px; height: 30px; display: flex; justify-content: center; align-items: center; }
  .tools span:last-child { width: 51px; }
  .main { display: flex; height: 927px; }
  .viewport { margin-left: 5px; width: 1860px; height: 927px; background: #fff; border-radius: 11px; overflow: hidden; display: grid; grid-template-columns: 1841px 19px; grid-template-rows: 909px 18px; }
  .page { display: flex; }
  .menu { margin-left: 20px; width: 313px; height: 889px; background: linear-gradient(188deg, #2a2a2d 60%, #232324 80%, #1b1b1b 95%); border-radius: 14px; display: flex; overflow: hidden; }
  .menulist { width: 294px; height: 607px; display: flex; flex-direction: column; justify-content: flex-end; padding-left: 43px; }
  .mi { flex: none; height: 44px; margin-bottom: 19px; display: flex; align-items: center; font: 300 17.600px Roboto, sans-serif; }
  .mi svg { width: 20px; margin-right: 17px; }
  .mi:last-child { height: 19px; margin: 12px 0 -1px; }
  .menuscroll { width: 19px; height: 607px; background: #fcfcfc; display: flex; justify-content: center; align-items: flex-end; padding-bottom: 9px; }
  .tri { display: block; width: 12px; height: 9px; background: #8b8b8b; }
  .tri.down { clip-path: polygon(0 0, 100% 0, 100% 18%, 58% 100%, 42% 100%, 0 18%); }
  .tri.up { clip-path: polygon(42% 0, 58% 0, 100% 82%, 100% 100%, 0 100%, 0 82%); }
  .tri.left { width: 9px; height: 12px; clip-path: polygon(0 42%, 0 58%, 82% 100%, 100% 100%, 100% 0, 82% 0); }
  .tri.right { width: 9px; height: 12px; clip-path: polygon(100% 42%, 100% 58%, 18% 100%, 0 100%, 0 0, 18% 0); }
  .panel { margin: 35px 0 0 40px; width: 1438px; height: 845px; background: #6f7c86; font-family: Roboto, sans-serif; display: flex; flex-direction: column; align-items: center; }
  h1 { margin: 0; height: 167px; padding-top: 26px; font: bold 57px/80px 'DejaVu Serif', serif; color: #dc1a68; }
  h1 span { display: block; transform: scaleX(.902); letter-spacing: -1.500px; -webkit-text-stroke: 1.600px #dc1a68; word-spacing: -3px; }
  .form { width: 723px; border: 1px solid #f5f6f7; border-top: 0; margin-left: 3px; }
  .row { height: 71px; border-top: 1px solid #f5f6f7; display: grid; grid-template-columns: 178px 1fr; }
  .row.tall { height: 191px; }
  .row.short { height: 53px; }
  .row b { font-size: 20px; font-weight: 650; line-height: 30px; padding: 11px 0 0 10px; color: #dc1a68; }
  .val { border-left: 1px solid #f5f6f7; padding-left: 10px; font-size: 17.600px; display: flex; align-items: center; color: #a9b1b8; }
  .val.dark { color: #495057; }
  .val.top { align-items: flex-start; padding-top: 25px; position: relative; }
  .misspelt { text-decoration: underline wavy #d82a2a 1.200px; text-underline-offset: 1px; text-decoration-skip-ink: none; }
  .resize { position: absolute; right: 12px; bottom: 11px; }
  .val.file { background: #65727c; color: #495057; }
  .choose { width: 92px; height: 50px; line-height: 50px; background: #5f6b75; border-right: 1px solid #4a535b; }
  .flowers { border-left: 1px solid #f5f6f7; display: flex; align-items: center; padding-left: 10.500px; color: #060606; font-size: 20px; }
  .flowers label { display: flex; align-items: center; margin-right: 5.200px; }
  .flowers i { width: 14px; height: 14px; margin: -3px 1.800px 0 0; border: 1px solid #767676; border-radius: 2.500px; background: #fff; }
  .flowers .wide i { margin-right: 6.500px; }
  .submit { width: 113px; height: 57px; margin: 10px 0 0 2px; border-radius: 6px; background: #dc1a68; display: flex; justify-content: center; align-items: center; font-size: 20px; }
  .rule { width: 722px; height: 1px; margin: 10px 0 0 3px; background: #fff; }
  .vbar { background: #fcfcfc; display: flex; flex-direction: column; align-items: center; padding: 10px 0 10px; }
  .vthumb { width: 11px; height: 242px; border-radius: 6px; background: #8b8b8b; margin: 10px 0 auto; }
  .hbar { grid-column: 1 / 3; background: #fcfcfc; display: flex; align-items: center; padding: 0 29px 0 10px; border-bottom: 1px solid #c9cfcc; }
  .hthumb { width: 1526px; height: 11px; border-radius: 6px; background: #8b8b8b; margin: 1px auto 0 10px; }
  .side { width: 54px; display: flex; flex-direction: column; align-items: center; padding-top: 2px; }
  .side span { height: 50.100px; display: flex; align-items: center; justify-content: center; }
  .side hr { width: 35px; height: 1px; border: 0; background: #666; margin: 15px 0 31px; }
  .side .low { margin: auto 0 0; }
  .side .gear { height: 55px; margin-bottom: -5px; }

  .taskbar { height: 59px; display: flex; align-items: center; background: linear-gradient(90deg, #22201e 0, #22211f 150px, #1e2228 260px, #1c2127 420px, #241d1d 500px, #2b1e1e 560px, #232120 700px, #222120 100%); }
  .weather { width: 398px; height: 59px; position: relative; display: flex; padding: 6px 0 0 25px; line-height: 20px; font-size: 14.400px; }
  .weather p { margin-left: 3px; }
  .weather div { padding-top: 3px; }
  .weather em { position: absolute; left: 45px; top: 7px; font-style: normal; color: #111; font-size: 13px; }
  .soft { color: #c8c8c8; }
  .start { margin-right: 17px; }
  .tsearch { width: 275px; height: 40px; border-radius: 20px; background: #454143; border: 1px solid #5b5757; display: flex; align-items: center; padding-left: 14px; font-size: 16.500px; color: #d4d2d3; margin-right: 1.500px; letter-spacing: -.1px; }
  .tsearch span { margin-left: 13px; }
  .bowl { margin: 0 9px 0 auto; }
  .apps { display: flex; }
  .app { width: 55.050px; display: flex; justify-content: center; }
  .tile { width: 50px; height: 50px; margin-top: 0; border-radius: 5px; border: 1px solid transparent; display: flex; flex-direction: column; align-items: center; }
  .active .tile { background: #302f2e; border-color: #393837; }
  .ic { width: 32px; height: 30px; margin: 9px 0 5px; display: flex; justify-content: center; align-items: center; }
  .active .ic { width: 30px; }
  .active .tile::after { content: ''; width: 20px; height: 4px; border-radius: 2px; background: #4cc2ff; }
  .open .tile::after { content: ''; width: 8px; height: 4px; border-radius: 2px; background: #9a9a9a; }
  .amz { width: 30px; height: 30px; background: #f1f1f1; display: flex; flex-direction: column; align-items: center; }
  .amz b { color: #949494; font: bold 30px/22px 'Open Sans', sans-serif; height: 22px; margin-top: -3px; margin-bottom: 3px; }
  .pc { position: relative; width: 30px; height: 30px; }
  .pc b { position: absolute; left: 6px; top: 6px; font: bold 11px/12px 'Open Sans', sans-serif; }
  .tray { margin-left: 72px; display: flex; align-items: center; line-height: 20px; height: 59px; }
  .tray span { display: flex; justify-content: center; }
  .t40 { width: 40px; }
  .t30 { width: 30px; }
  .lang { width: 57px; text-align: center; margin-right: 3px; font-size: 14.500px; }
  .clock { width: 93px; text-align: right; font-size: 15px; }
  .clock p { margin-top: -1px; margin-bottom: 1px; }
  .bell { margin-left: 11px; }
  .pre { margin-left: 22px; width: 30px; height: 29px; position: relative; }
  .pre em { position: absolute; left: 7px; top: 19px; width: 23px; height: 10px; border-radius: 2px; background: #fcc21b; color: #151515; font: bold 8px/10px 'Open Sans', sans-serif; letter-spacing: .6px; text-align: center; }

  .dialog { position: absolute; left: 8px; top: 0; width: 944px; height: 592px; border: 1px solid #4b4b4b; border-radius: 10px; overflow: hidden; background: #191919; box-shadow: 0 32px 62px rgba(0, 0, 0, .62), 0 2px 22px rgba(0, 0, 0, .32); }
  .dtitle { height: 37px; background: linear-gradient(90deg, #251f1c 60%, #2a1e1b 85%, #241e1a); display: flex; align-items: center; padding: 0 14.500px 0 9px; }
  .dedge { width: 20px; height: 20px; margin-right: 6px; }
  .dclose { margin-left: auto; }
  .dnav { height: 65px; display: flex; align-items: center; padding-bottom: 2px; }
  .n1 { width: 44px; display: flex; justify-content: center; }
  .n1:first-child { margin-left: 5px; }
  .n2 { width: 36px; display: flex; justify-content: center; }
  .n2:nth-child(3) { margin-left: -1px; margin-right: 1px; }
  .n2:nth-child(4) { margin-left: -1px; margin-right: 1px; }
  .path { margin-left: 7px; width: 493px; height: 44px; border: 1px solid #535353; display: flex; align-items: center; padding-left: 11px; letter-spacing: .12px; }
  .cr { margin: 0 11px 0 10px; }
  .p1 { width: 52px; letter-spacing: -.1px; }
  .pchev { margin-left: auto; margin-right: 31px; }
  .reload { margin-right: 16px; }
  .dsearch { margin-left: 12px; width: 253px; height: 44px; border: 1px solid #535353; display: flex; align-items: center; justify-content: space-between; padding: 0 19px 0 9px; color: #767676; letter-spacing: .1px; }
  .dtools { height: 39px; background: #202020; border-bottom: 1px solid #151515; display: flex; align-items: center; padding: 0 19px 0 22px; }
  .org { width: 60px; letter-spacing: .05px; }
  .small { width: 9px; height: 5px; background: #c4c4c4; clip-path: polygon(0 0, 100% 0, 50% 100%); margin-left: 5px; }
  .nf { margin-left: 36px; letter-spacing: .25px; }
  .view { margin-left: auto; }
  .s2 { margin-left: 12px; margin-right: 27px; }
  .help { width: 20px; height: 20px; border-radius: 50%; background: #1389dc; text-align: center; line-height: 20px; margin-left: 26px; }
  .dbody { height: 349px; display: flex; overflow: hidden; border-left: 3px solid #141414; }
  .tree { width: 171px; }
  .node { height: 40px; display: flex; align-items: center; padding-left: 38px; }
  .node.od { padding: 0 0 2px 16px; height: 42px; }
  .od .nic { margin-left: 15px; }
  .nic { width: 24px; display: flex; justify-content: center; margin-right: 3px; }
  .pin { margin: 0 4px 0 auto; }
  .sel { background: #333; }
  .tree hr { margin: 18px 10px 19px; height: 1px; border: 0; background: #3c3c3c; }
  .treebar { width: 22px; background: #171717; }
  .treebar div { width: 6px; height: 119px; margin: 55px 0 0 8px; background: #9a9a9a; }
  .list { flex: 1; border-left: 3px solid #262626; text-align: center; padding-top: 19px; line-height: 22px; }
  .dfoot { height: 101px; background: #383838; padding-top: 16px; position: relative; }
  .l1 { display: flex; align-items: flex-start; }
  .fn { width: 215px; text-align: right; line-height: 29px; margin-right: 6px; letter-spacing: .05px; }
  .inp { width: 451px; height: 29px; border: 1px solid #999; display: flex; align-items: center; justify-content: flex-end; padding-right: 5px; color: #ccc; }
  .sel2 { width: 235px; height: 28px; margin-left: 15px; border: 1px solid #999; background: #333; display: flex; align-items: center; justify-content: space-between; padding: 0 5px 0 3px; }
  .grey { color: #ccc; }
  .l2 { display: flex; padding-left: 521px; margin-top: 8px; gap: 17px; }
  .btn { width: 108px; height: 31px; border: 1px solid #8f8f8f; border-radius: 4px; background: #333; display: flex; align-items: center; justify-content: center; }
  .up2 { width: 150px; letter-spacing: .25px; }
  .def { border-color: #fff; }
  .grip { position: absolute; right: 3px; bottom: 3px; }
</style>
